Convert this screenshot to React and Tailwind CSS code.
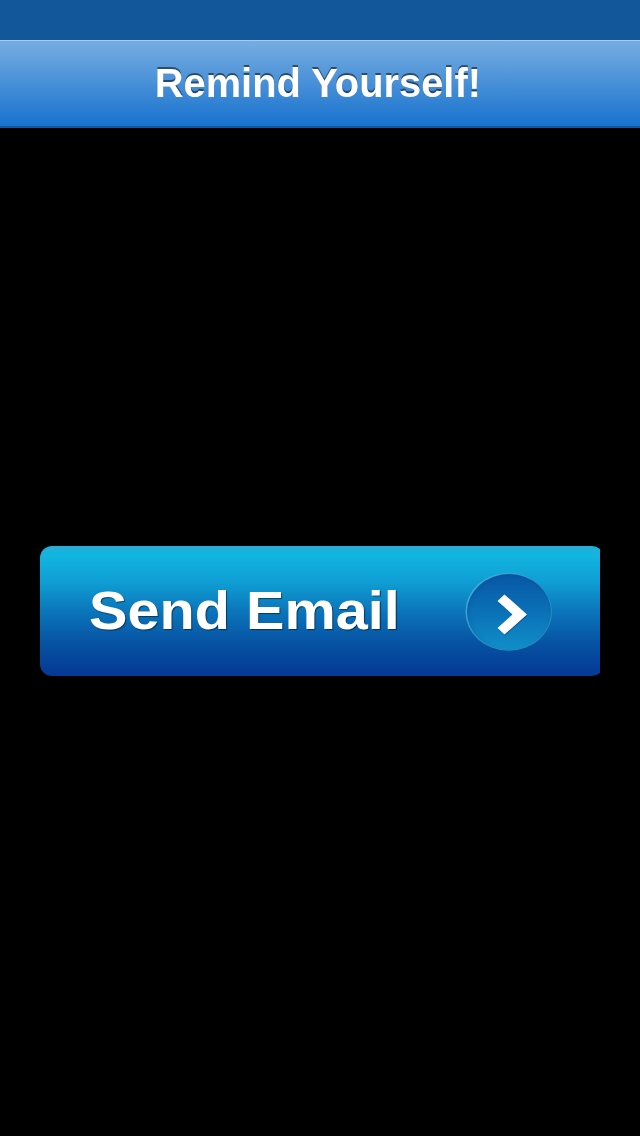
export default function App() {
  return (
    <div className="flex h-[1136px] w-[640px] flex-col bg-black font-['Liberation_Sans',Arial,sans-serif] font-bold text-white">
      <div className="h-10 bg-[#125799]" />
      <header className="flex h-[88px] items-center justify-center border-t border-b-2 border-t-[#a5caed] border-b-[#11599f] bg-linear-to-b/srgb from-[#77ade1] to-[#1872ce]">
        <h1 className="mr-[4px] mb-[2px] scale-x-[0.972] text-[41px] leading-[46px] [text-shadow:0_-2px_0_rgba(0,0,0,0.5)]">
          Remind Yourself!
        </h1>
      </header>
      <main className="px-10 pt-[418px]">
        <button className="block h-[130px] w-[560px] overflow-hidden text-left">
          <span className="flex h-[130px] w-[564px] items-center rounded-[12px] bg-[linear-gradient(to_bottom,#12b4e0_8%,#0f9fd4_27%,#0b76bb_50%,#0651a2_76%,#053894_100%)] p-[3px] pt-0">
            <svg className="-mr-[564px] h-[130px] w-[564px] shrink-0 -translate-x-[3px] translate-y-[1.5px]" viewBox="0 0 564 130" fill="none">
              <defs>
                <linearGradient id="rim" gradientUnits="userSpaceOnUse" x1="0" y1="2" x2="0" y2="16">
                  <stop stopColor="#37a9ca" />
                  <stop offset="1" stopColor="#37a9ca" stopOpacity="0" />
                </linearGradient>
              </defs>
              <path d="M3.5 15Q3.5 2 14 2H546Q557 2 557 15" stroke="url(#rim)" strokeWidth="2" />
            </svg>
            <span className="mt-[2px] ml-[46px] w-[374px] origin-left scale-x-[1.088] text-[53px] leading-[60px] whitespace-nowrap [text-shadow:1px_1px_1px_rgba(0,0,0,0.5)]">
              Send Email
            </span>
            <svg className="mt-1 h-[84px] w-[92px] shrink-0" viewBox="0 0 92 84">
              <defs>
                <linearGradient id="disc" x1="0" y1="0" x2="0" y2="1">
                  <stop stopColor="#0857a5" />
                  <stop offset="0.5" stopColor="#0a71b7" />
                  <stop offset="1" stopColor="#118fc9" />
                </linearGradient>
                <linearGradient id="edge" x1="0" y1="0" x2="1" y2="1">
                  <stop stopColor="#50b5dc" />
                  <stop offset="0.55" stopColor="#238fc5" />
                  <stop offset="1" stopColor="#278dc3" />
                </linearGradient>
                <filter id="inner" x="-10%" y="-10%" width="120%" height="120%">
                  <feGaussianBlur stdDeviation="2" />
                </filter>
                <clipPath id="round">
                  <ellipse cx="46" cy="42" rx="42" ry="38" />
                </clipPath>
              </defs>
              <ellipse cx="45.7" cy="41.8" rx="43.3" ry="39" fill="url(#edge)" />
              <ellipse cx="46" cy="42" rx="42" ry="38" fill="url(#disc)" />
              <g clipPath="url(#round)">
                <ellipse cx="47.5" cy="43.5" rx="43.5" ry="39.5" fill="none" stroke="#064b91" strokeOpacity="0.4" strokeWidth="3" filter="url(#inner)" />
              </g>
              <path d="M34.5 31L41.5 24.5L64 44.5L41.5 64.5L34.5 58L49.5 44.5Z" fill="#063d80" fillOpacity="0.6" transform="translate(.5 1)" />
              <path d="M34.5 31L41.5 24.5L64 44.5L41.5 64.5L34.5 58L49.5 44.5Z" fill="white" />
            </svg>
          </span>
        </button>
      </main>
    </div>
  )
}
